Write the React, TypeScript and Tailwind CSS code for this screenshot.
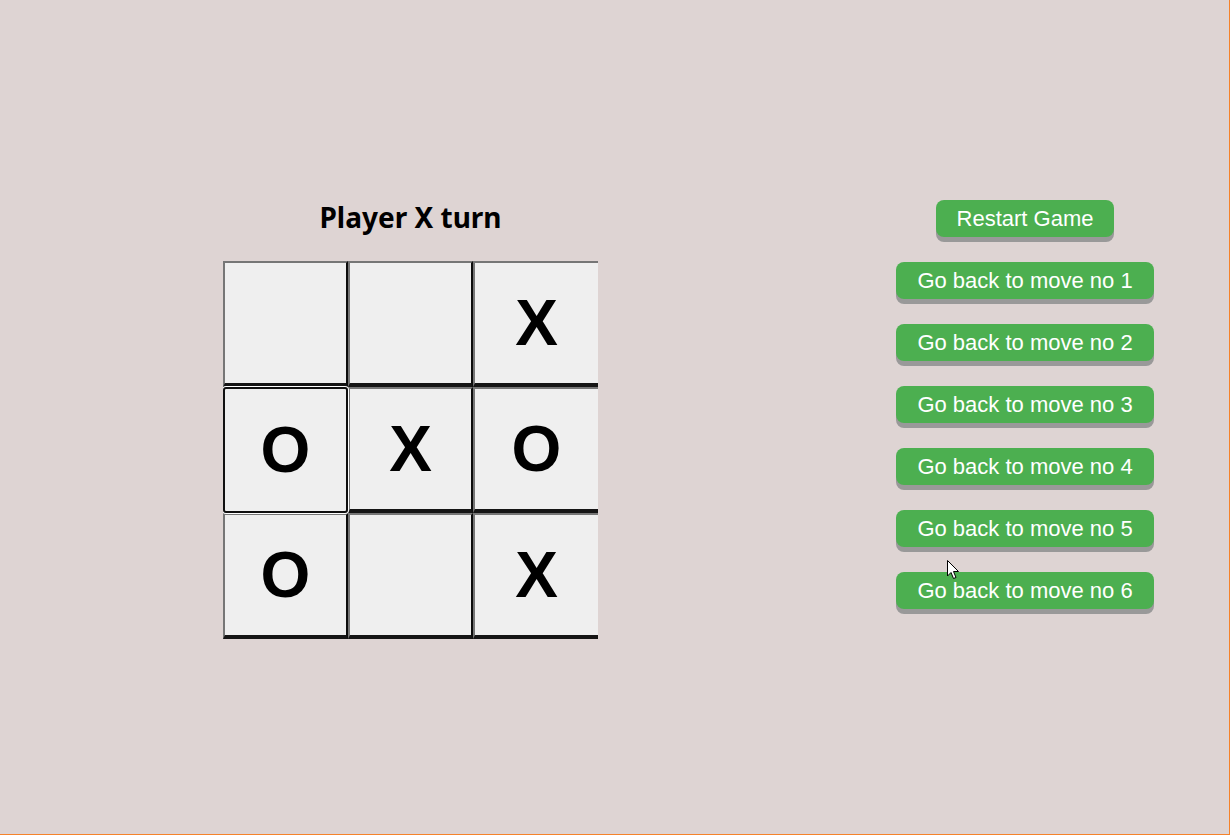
import React from 'react';

const board: string[] = ['', '', 'X', 'O', 'X', 'O', 'O', '', 'X'];
const moves = [1, 2, 3, 4, 5, 6];

function Cell({ value, index }: { value: string; index: number }) {
  const lastCol = index % 3 === 2;
  const focused = index === 3;
  const base =
    'flex h-[126px] w-[125px] shrink-0 items-center justify-center bg-[#efefef] text-[64px] font-bold leading-none text-black';
  if (focused) {
    return (
      <div className={`${base} relative z-10 rounded-[3px] border-2 border-[#101010] shadow-[0_0_0_1px_#ffffff]`}>
        {value}
      </div>
    );
  }
  return (
    <div
      className={`${base} border-t-2 border-l-2 border-b-[4px] border-t-[#767676] border-l-[#767676] border-b-[#151515] ${
        lastCol ? 'border-r-0' : 'border-r-2 border-r-[#0c0c0c]'
      }`}
    >
      {value}
    </div>
  );
}

export default function App() {
  return (
    <div
      className="relative flex h-[835px] w-full border-r border-b border-[#f5822a] bg-[#ded4d3]"
      style={{ fontFamily: '"Liberation Sans", Arial, sans-serif' }}
    >
      {/* board */}
      <div className="ml-[223px] mt-[197px] flex w-[375px] flex-col">
        <h1
          className="mb-[24px] text-center text-[28px] font-bold leading-[40px] text-black"
          style={{ fontFamily: '"Noto Sans", "Open Sans", sans-serif' }}
        >
          Player X turn
        </h1>
        <div className="grid w-[375px] grid-cols-3 overflow-hidden">
          {board.map((v, i) => (
            <Cell key={i} value={v} index={i} />
          ))}
        </div>
      </div>

      {/* history */}
      <div className="ml-auto mr-[75px] mt-[200px] flex w-[258px] flex-col items-center gap-[25px]">
        <button
          type="button"
          className="h-[37px] rounded-[8px] bg-[#4caf50] px-[21px] text-[22px] leading-[25px] text-white shadow-[0_5px_0_#999999]"
        >
          Restart Game
        </button>
        {moves.map((m) => (
          <button
            key={m}
            type="button"
            className="h-[37px] rounded-[8px] bg-[#4caf50] px-[21px] text-[22px] leading-[25px] text-white shadow-[0_5px_0_#999999]"
          >
            Go back to move no {m}
          </button>
        ))}
      </div>

      {/* mouse pointer */}
      <svg className="absolute left-[947px] top-[560px]" width="13" height="20" viewBox="0 0 13 20">
        <path d="M0.5 0.5 L0.5 16 L4 12.5 L6.5 18.5 L9 17.5 L6.5 11.5 L11.5 11.5 Z" fill="#ffffff" stroke="#000000" strokeWidth="1" />
      </svg>
    </div>
  );
}
